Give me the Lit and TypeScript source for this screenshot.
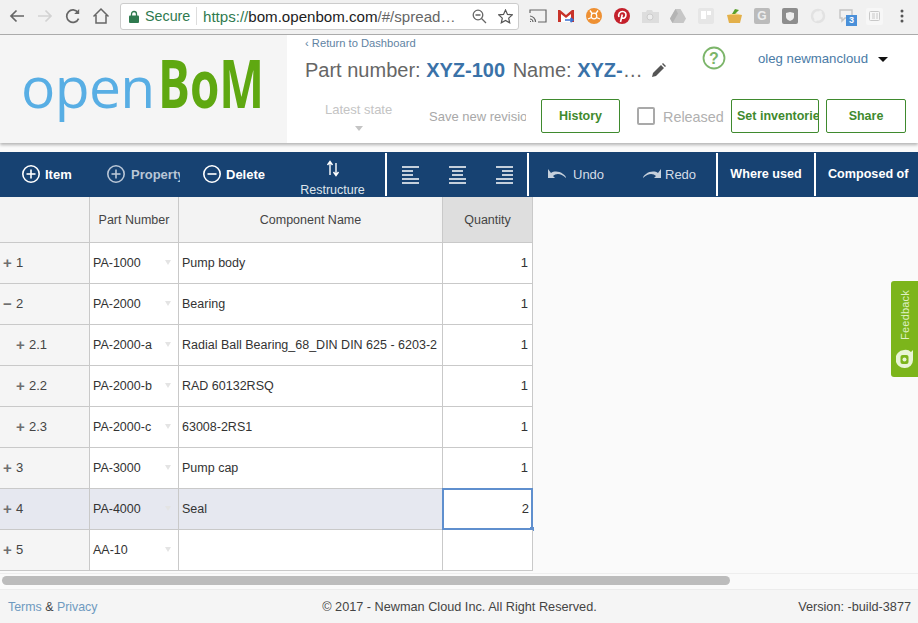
import { LitElement, html, css, svg } from "lit";
import { customElement } from "lit/decorators.js";

const rows = [
  { n: "1", sign: "+", sub: false, part: "PA-1000", name: "Pump body", q: "1" },
  { n: "2", sign: "−", sub: false, part: "PA-2000", name: "Bearing", q: "1" },
  { n: "2.1", sign: "+", sub: true, part: "PA-2000-a", name: "Radial Ball Bearing_68_DIN DIN 625 - 6203-2", q: "1" },
  { n: "2.2", sign: "+", sub: true, part: "PA-2000-b", name: "RAD 60132RSQ", q: "1" },
  { n: "2.3", sign: "+", sub: true, part: "PA-2000-c", name: "63008-2RS1", q: "1" },
  { n: "3", sign: "+", sub: false, part: "PA-3000", name: "Pump cap", q: "1" },
  { n: "4", sign: "+", sub: false, part: "PA-4000", name: "Seal", q: "2", sel: true },
  { n: "5", sign: "+", sub: false, part: "AA-10", name: "", q: "" },
];

const plusCircle = (minus = false) => html`<svg width="20" height="20" viewBox="0 0 20 20" fill="none" stroke="currentColor" stroke-width="1.6"><circle cx="10" cy="10" r="8.2"/><path d="M5.5 10h9"/>${minus ? "" : svg`<path d="M10 5.5v9"/>`}</svg>`;
const align = (k: string) => {
  const x = k === "l" ? 0 : k === "c" ? 3 : 6;
  return html`<svg width="17" height="18" viewBox="0 0 17 18" stroke="#fff" stroke-width="1.4"><path d="M0 1h17M${x} 5h11M${x} 9h11M0 13h17M0 17h17"/></svg>`;
};

@customElement("app-root")
export class AppRoot extends LitElement {
  static styles = css`
    :host { display: flex; flex-direction: column; width: 918px; height: 623px; overflow: hidden; position: relative;
      font-family: "Liberation Sans", Arial, sans-serif; background: #fafafa; color: #333; }
    .chrome { height: 34px; flex: none; display: flex; align-items: center; background: #f1f1f1; border-bottom: 1px solid #aeaeae; }
    .nav { display: flex; width: 120px; flex: none; padding-left: 7px; box-sizing: border-box; gap: 8px; margin-top: -2px; }
    .nav svg { display: block; }
    .omni { width: 399px; height: 27px; flex: none; box-sizing: border-box; background: #fff; border: 1px solid #ccc; border-radius: 3px; display: flex; align-items: center; font-size: 14px; margin-top: -2px; }
    .lock { margin-left: 8px; margin-right: 6px; display: block; }
    .secure { color: #2f7a4f; width: 48px; font-size: 14.3px; }
    .divider { width: 1px; height: 18px; background: #ddd; margin: 0 6px 0 3px; }
    .url { color: #2f7a4f; width: 252px; white-space: nowrap; font-size: 15.1px; }
    .url b { color: #222; font-weight: normal; }
    .url i { color: #666; font-style: normal; }
    .omni-ic { display: flex; gap: 11px; margin-left: 17px; }
    .exts { display: flex; align-items: center; flex: 1; padding-left: 5px; margin-top: -2px; }
    .ext { width: 28px; height: 20px; display: flex; align-items: center; justify-content: center; flex: none; position: relative; }
    .ext-sq { width: 16px; height: 16px; border-radius: 2px; background: #bbb; color: #eee; font-size: 12px; font-weight: bold; display: flex; align-items: center; justify-content: center; }
    .ext-sq.light { background: #e4e4e4; color: #bbb; }
    .badge { position: absolute; left: 14px; top: 9px; width: 11px; height: 11px; background: #4a90d9; color: #fff; font-size: 9px; font-weight: bold; line-height: 11px; text-align: center; }

    .head { height: 108px; flex: none; display: flex; background: #fff; box-shadow: 0 2px 3px rgba(0,0,0,.28); position: relative; }
    .logo { width: 287px; flex: none; background: #f5f5f5; box-sizing: border-box; padding: 8px 0 0 21px; display: flex; align-items: flex-start; white-space: nowrap; line-height: 1; }
    .logo .a { font-family: "Open Sans", sans-serif; font-size: 57px; font-weight: 500; color: #58aee4; letter-spacing: -.6px; margin-top: 15px; }
    .logo .b { font-family: "Open Sans", sans-serif; font-weight: 700; color: #5fa811; font-size: 66px; display: inline-block; transform: scaleX(.72); transform-origin: left top; margin: 6px 0 0 3px; }
    .hmain { flex: 1; display: flex; flex-direction: column; padding-left: 18px; }
    .back { font-size: 11.2px; color: #5f83a3; height: 15px; line-height: 15px; margin-top: 1px; }
    .top { display: flex; height: 41px; }
    .title { font-size: 20px; color: #666; line-height: 24px; width: 397px; display: flex; align-items: center; height: 24px; margin-top: 7px; white-space: pre; flex: none; }
    .title b { color: #3a72a8; }
    .title .nm { margin-left: 2px; }
    .title svg { margin-left: 4px; flex: none; }
    .help { width: 56px; margin-top: -5px; flex: none; }
    .user { font-size: 13.2px; color: #4a7ba6; margin-top: -3px; height: 20px; display: flex; align-items: center; gap: 10px; white-space: nowrap; }
    .caret { width: 0; height: 0; border-left: 5px solid transparent; border-right: 5px solid transparent; border-top: 5px solid #111; margin-top: 2px; }
    .ctrl { display: flex; align-items: center; height: 34px; margin-top: 7px; }
    .state { flex: none; padding-left: 20px; box-sizing: border-box; font-size: 13px; color: #c4c4c4; width: 124px; display: flex; flex-direction: column; align-items: flex-start; }
    .state span { width: 67px; text-align: center; white-space: nowrap; margin-top: 1px; }
    .state i { width: 0; height: 0; border-left: 4px solid transparent; border-right: 4px solid transparent; border-top: 5px solid #c4c4c4; margin: 9px 0 0 30px; }
    .save { width: 97px; flex: none; overflow: hidden; white-space: nowrap; color: #a8a8a8; font-size: 13px; margin-right: 15px; }
    .btn { height: 34px; box-sizing: border-box; border: 1px solid #3f8a2e; border-radius: 2px; color: #3f8a2e; font-size: 12.5px; font-weight: bold; display: flex; align-items: center; justify-content: center; flex: none; background: #fff; overflow: hidden; white-space: nowrap; }
    .cb { width: 18px; height: 18px; box-sizing: border-box; border: 2px solid #a9a9a9; border-radius: 2px; margin: 0 8px 0 17px; flex: none; }
    .rel { font-size: 14.4px; color: #b0b0b0; width: 60px; margin-right: 8px; margin-top: 2px; white-space: nowrap; }

    .gap { height: 9px; flex: none; }
    .tools { height: 45px; flex: none; background: #174272; color: #fff; display: flex; align-items: stretch; font-size: 13px; font-weight: bold; }
    .t { display: flex; align-items: center; flex: none; box-sizing: border-box; white-space: nowrap; overflow: hidden; padding-bottom: 1px; }
    .t.dim { color: #b9c6d6; }
    .t.semi { font-weight: normal; color: #d5dde6; }
    .t svg { flex: none; display: block; }
    .group { display: flex; align-items: center; gap: 5px; overflow: hidden; }
    .sep { width: 2px; background: #fff; flex: none; margin: 1px 0; }
    .rs { flex-direction: column; font-weight: normal; color: #dfe5ec; font-size: 12.5px; justify-content: flex-end; padding-bottom: 0; }
    .rs svg { margin-bottom: 6px; }
    .aligns { display: flex; align-items: center; justify-content: space-between; padding: 0 14px 0 15px; width: 140px; box-sizing: border-box; flex: none; }
    .wide { font-size: 12.6px; }

    .grid { display: grid; grid-template-columns: 90px 89px 264px 90px; grid-auto-rows: 41px; grid-template-rows: 46px; width: 533px; flex: none; position: relative; }
    .c { box-sizing: border-box; border-right: 1px solid #c9c9c9; border-bottom: 1px solid #c9c9c9; font-size: 12.5px; color: #333; display: flex; align-items: center; white-space: nowrap; overflow: hidden; background: #fff; padding-left: 3px; position: relative; padding-bottom: 1px; }
    .h { background: #f3f3f3; justify-content: center; padding-left: 0; color: #444; padding-bottom: 0; }
    .h.active { background: #dedede; }
    .idx { background: #f5f5f5; color: #444; font-size: 13px; }
    .idx .s { color: #6f6f6f; font-weight: bold; font-size: 15px; margin-right: 3px; width: 10px; line-height: 1; }
    .idx.sub { padding-left: 16px; }
    .sel, .idx.sel { background: #e6e8f0; }
    .q { justify-content: flex-end; padding-right: 4px; padding-left: 0; font-size: 13px; }
    .q.focus { background: #fff; border: 2px solid #5f8fce; margin: -1px 0 0 -1px; overflow: visible; padding-right: 2px; }
    .handle { position: absolute; right: -3px; bottom: -3px; width: 4px; height: 4px; background: #5f8fce; }
    .f { position: absolute; right: 7px; top: 17px; width: 0; height: 0; border-left: 3px solid transparent; border-right: 3px solid transparent; border-top: 5px solid #e4e4e4; }

    .spacer { flex: 1; }
    .scroll { height: 14px; flex: none; border-top: 1px solid #eee; display: flex; align-items: center; padding-left: 2px; box-sizing: border-box; margin-bottom: 2px; }
    .thumb { width: 728px; height: 9px; background: #bcbcbc; border-radius: 5px; }
    .foot { height: 33px; flex: none; background: #f5f5f5; border-top: 1px solid #ececec; display: grid; grid-template-columns: 1fr auto 1fr; align-items: center; padding: 0 7px 0 8px; font-size: 12.7px; color: #444; }
    .foot a { color: #6f9ac0; text-decoration: none; }
    .terms { font-size: 12.4px; }
    .foot .r { text-align: right; }

    .fb { position: absolute; right: 0; top: 281px; width: 27px; height: 96px; background: #7cb51b; border-radius: 3px 0 0 3px; display: flex; flex-direction: column; align-items: center; padding-top: 9px; box-sizing: border-box; color: #dff0c4; font-size: 11px; }
    .fb span { writing-mode: vertical-rl; transform: rotate(180deg); letter-spacing: .2px; }
    .fb svg { margin-top: 8px; }
  `;

  render() {
    return html`
      <div class="chrome">
        <div class="nav">
          <svg width="20" height="20" viewBox="0 0 20 20" fill="none" stroke="#666" stroke-width="1.7"><path d="M17 10H4M9.5 4.5L4 10l5.500 5.500"/></svg>
          <svg width="20" height="20" viewBox="0 0 20 20" fill="none" stroke="#d2d2d2" stroke-width="1.7"><path d="M3 10h13M10.500 4.500L16 10l-5.500 5.500"/></svg>
          <svg width="20" height="20" viewBox="0 0 20 20" fill="none" stroke="#666" stroke-width="1.7"><path d="M15.600 12.600A6.200 6.200 0 1 1 15 6.600"/><path d="M16.200 3v5h-5" fill="#666" stroke="none"/></svg>
          <svg width="20" height="20" viewBox="0 0 20 20" fill="none" stroke="#666" stroke-width="1.5"><path d="M2.500 10.500L10 3l7.500 7.500M5 9v8h10V9"/></svg>
        </div>
        <div class="omni">
          <svg class="lock" width="10" height="13" viewBox="0 0 10 13"><path d="M2.500 6V4a2.500 2.500 0 0 1 5 0v2" fill="none" stroke="#2f7a4f" stroke-width="1.300"/><rect y="5.500" width="10" height="7.500" rx="1" fill="#2f7a4f"/></svg>
          <span class="secure">Secure</span><span class="divider"></span>
          <span class="url">https://<b>bom.openbom.com</b><i>/#/spread…</i></span>
          <div class="omni-ic">
            <svg width="15" height="15" viewBox="0 0 15 15" fill="none" stroke="#666" stroke-width="1.300"><circle cx="6" cy="6" r="4.800"/><path d="M3.500 6h5M9.500 9.500L14 14"/></svg>
            <svg width="15" height="15" viewBox="0 0 15 15" fill="none" stroke="#555" stroke-width="1.200"><path d="M7.500 1l2 4.400 4.800.5-3.600 3.200 1 4.700-4.200-2.400-4.200 2.400 1-4.700L.7 5.900l4.800-.5z"/></svg>
          </div>
        </div>
        <div class="exts">
          <div class="ext"><svg width="18" height="14" viewBox="0 0 18 14" fill="none" stroke="#666" stroke-width="1.200"><path d="M1 4V1h16v12H9M1 7a6 6 0 0 1 5.500 6M1 10a3 3 0 0 1 3 3M1 12.500h1"/></svg></div>
          <div class="ext"><svg width="16" height="14" viewBox="0 0 16 14"><path d="M0 1h2l6 5 6-5h2v12H0z" fill="#c8332a"/><path d="M3 5l5 4 5-4v8H3z" fill="#fff"/><path d="M7 11h8M12.500 9l2.500 2-2.500 2" stroke="#3a6fd0" stroke-width="1.700" fill="none"/></svg></div>
          <div class="ext"><svg width="16" height="16" viewBox="0 0 16 16"><circle cx="8" cy="8" r="8" fill="#ee9033"/><circle cx="8" cy="8" r="2.800" fill="none" stroke="#fff" stroke-width="1.200"/><path d="M4 2.500l2.500 3.500M12 2.500L9.500 6M2 11l3.500-1.500M14 11l-3.500-1.500" stroke="#fff" stroke-width="1.300"/></svg></div>
          <div class="ext"><svg width="16" height="16" viewBox="0 0 16 16"><circle cx="8" cy="8" r="8" fill="#c4202b"/><path d="M6.500 14l1.800-7.500M5 9C3.800 5.500 6 3.500 8.500 3.500c2.500 0 4 2 3.300 4.500-.6 2.200-3 3-4 1.500" fill="none" stroke="#fff" stroke-width="1.600"/></svg></div>
          <div class="ext"><svg width="17" height="13" viewBox="0 0 17 13"><path d="M0 2h4l1-2h5l1 2h6v11H0z" fill="#ddd"/><circle cx="8" cy="7" r="3" fill="#eee" stroke="#ccc"/></svg></div>
          <div class="ext"><svg width="16" height="14" viewBox="0 0 16 14"><path d="M5.500 0h5L16 9.500 13.500 14h-11L0 9.500z" fill="#c6c6c6"/><path d="M5.500 0L8 4.500 2.500 14 0 9.500z" fill="#b4b4b4"/></svg></div>
          <div class="ext"><div class="ext-sq light" style="background:#e6e6e6"><svg width="10" height="10" viewBox="0 0 10 10"><path d="M0 0h5v8H0zM6 0h4v4H6z" fill="#fff"/></svg></div></div>
          <div class="ext"><svg width="17" height="16" viewBox="0 0 17 16"><path d="M1 7h15l-2 8H3z" fill="#e3b04a"/><path d="M1 7l8-2 7 2" fill="#f3d27a"/><path d="M6 6l3-5 4 1-4 4z" fill="#5aa02c"/></svg></div>
          <div class="ext"><div class="ext-sq">G</div></div>
          <div class="ext"><div class="ext-sq" style="background:#8d8d8d"><svg width="10" height="11" viewBox="0 0 10 11"><path d="M1 2l4-1 4 1v4c0 2-2 3-4 4-2-1-4-2-4-4z" fill="#eee"/></svg></div></div>
          <div class="ext"><svg width="16" height="16" viewBox="0 0 16 16" fill="none" stroke="#e2e2e2" stroke-width="2.500"><circle cx="8" cy="8" r="6"/><path d="M11 3L5 13" stroke="#f1f1f1"/></svg></div>
          <div class="ext"><svg width="16" height="14" viewBox="0 0 16 14" fill="none" stroke="#c4c4c4" stroke-width="1.400"><path d="M2 1h12v8H7l-3 3V9H2z"/></svg><span class="badge">3</span></div>
          <div class="ext"><div class="ext-sq light" style="background:#f7f7f7;width:17px;height:17px"><svg width="11" height="10" viewBox="0 0 11 10"><rect x=".5" y=".5" width="10" height="9" rx="1" fill="none" stroke="#c8c8c8"/><path d="M3 3h3M3 5h3M3 7h3M8 2v6" stroke="#c8c8c8"/></svg></div></div>
          <div class="ext"><svg width="4" height="14" viewBox="0 0 4 14" fill="#555"><circle cx="2" cy="2" r="1.500"/><circle cx="2" cy="7" r="1.500"/><circle cx="2" cy="12" r="1.500"/></svg></div>
        </div>
      </div>

      <div class="head">
        <div class="logo"><span class="a">open</span><span class="b">BoM</span></div>
        <div class="hmain">
          <div class="back">‹ Return to Dashboard</div>
          <div class="top">
            <div class="title">Part number: <b>XYZ-100</b><span class="nm"> Name: </span><b>XYZ-</b>… <svg width="14" height="14" viewBox="0 0 14 14" fill="#555"><path d="M0 14l1-4 8-8 3 3-8 8zM10 1l1-1 3 3-1 1z"/></svg></div>
            <div class="help"><svg width="24" height="24" viewBox="0 0 24 24" fill="none" stroke="#7cb56a" stroke-width="1.800"><circle cx="12" cy="12" r="10.500"/><text x="12" y="17.500" text-anchor="middle" font-size="16" font-weight="bold" font-family="Liberation Sans" fill="#7cb56a" stroke="none">?</text></svg></div>
            <div class="user"><span>oleg newmancloud</span><i class="caret"></i></div>
          </div>
          <div class="ctrl">
            <div class="state"><span>Latest state</span><i></i></div>
            <div class="save">Save new revision</div>
            <div class="btn" style="width:79px">History</div>
            <div class="cb"></div>
            <div class="rel">Released</div>
            <div class="btn" style="width:88px;justify-content:flex-start;padding-left:5px">Set inventories</div>
            <div class="btn" style="width:80px;margin-left:7px">Share</div>
          </div>
        </div>
      </div>

      <div class="gap"></div>

      <div class="tools">
        <div class="t" style="width:106px;padding-left:21px;gap:4px">${plusCircle()}Item</div>
        <div class="t dim" style="width:96px"><span class="group" style="width:74px">${plusCircle()}Property</span></div>
        <div class="t" style="width:97px"><span class="group" style="gap:4px">${plusCircle(true)}Delete</span></div>
        <div class="t rs" style="width:86px;padding-right:19px">
          <svg width="14" height="17" viewBox="0 0 14 17" fill="none" stroke="#fff" stroke-width="1.400"><path d="M4 15V2M1.500 5L4 1.500 6.500 5M10 3v12M7.500 12l2.500 3.500L12.500 12"/></svg>
          Restructure
        </div>
        <div class="sep"></div>
        <div class="aligns">${align("l")}${align("c")}${align("r")}</div>
        <div class="sep"></div>
        <div class="t semi" style="width:93px;padding-left:19px;gap:5px">
          <svg width="20" height="10" viewBox="0 0 20 10" fill="#c6d0dc"><path d="M0 0v9h7L5 7c3-3 8-3 13 2 0-1-1-3-3-4C11 2 6 2 3 4z"/></svg>Undo</div>
        <div class="t semi" style="width:94px;padding-left:19px;gap:4px">
          <svg width="20" height="10" viewBox="0 0 20 10" fill="#c6d0dc"><path d="M20 0v9h-7l2-2C12 4 7 4 2 9c0-1 1-3 3-4 4-3 9-3 12-1z"/></svg>Redo</div>
        <div class="sep"></div>
        <div class="t wide" style="width:96px;justify-content:center">Where used</div>
        <div class="sep"></div>
        <div class="t wide" style="flex:1;padding-left:12px">Composed of</div>
      </div>

      <div class="grid">
        <div class="c h"></div>
        <div class="c h">Part Number</div>
        <div class="c h">Component Name</div>
        <div class="c h active">Quantity</div>
        ${rows.map((r) => html`
          <div class="c idx ${r.sub ? "sub" : ""} ${r.sel ? "sel" : ""}"><span class="s">${r.sign}</span>${r.n}</div>
          <div class="c ${r.sel ? "sel" : ""}">${r.part}<i class="f"></i></div>
          <div class="c ${r.sel ? "sel" : ""}">${r.name}</div>
          <div class="c q ${r.sel ? "focus" : ""}">${r.q}${r.sel ? html`<i class="handle"></i>` : ""}</div>
        `)}
      </div>

      <div class="spacer"></div>
      <div class="scroll"><div class="thumb"></div></div>
      <div class="foot">
        <div class="terms"><a>Terms</a> &amp; <a>Privacy</a></div>
        <div>© 2017 - Newman Cloud Inc. All Right Reserved.</div>
        <div class="r">Version: -build-3877</div>
      </div>

      <div class="fb">
        <span>Feedback</span>
        <svg width="17" height="22" viewBox="0 0 17 22"><path d="M8 2a8 8 0 0 1 7 2l2-2v10a8 8 0 0 1-8 8A8.500 8.500 0 0 1 8 2z" fill="#e9f5d5"/><rect x="4.500" y="7" width="8" height="9" rx="2" fill="#7cb51b"/><circle cx="8.500" cy="11.500" r="2" fill="#e9f5d5"/></svg>
      </div>
    `;
  }
}
